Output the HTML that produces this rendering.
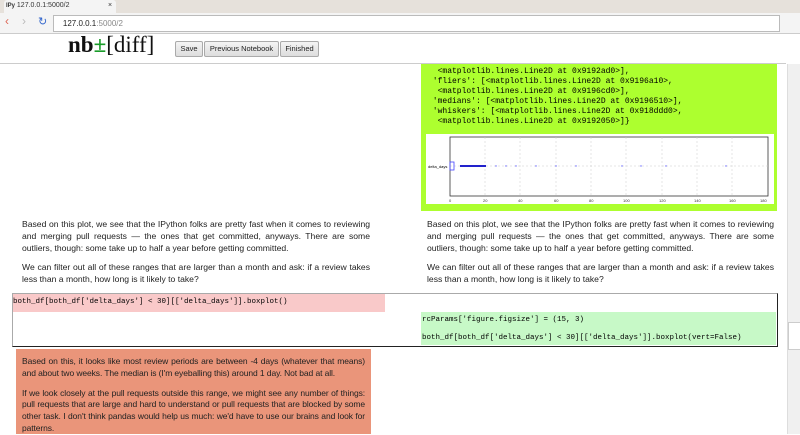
<!DOCTYPE html><html><head><style>
body{margin:0;width:800px;height:434px;overflow:hidden;background:#fff;font-family:"Liberation Sans",sans-serif;position:relative}
.a{position:absolute}
.p{font-size:8.5px;line-height:11.8px;color:#222;text-align:justify;margin:0;letter-spacing:-0.1px}
.t .p{font-size:8.6px;letter-spacing:0}
.m{font-family:"Liberation Mono",monospace;font-size:7.5px;color:#000;white-space:pre}
.btn{position:absolute;top:41px;height:14px;border:1px solid #aaa;background:linear-gradient(#f4f4f4,#ddd);font-size:7.5px;line-height:14px;text-align:center;border-radius:2px;color:#222}
</style></head><body>
<div class="a" style="left:0;top:0;width:800px;height:13px;background:#e6e1db"></div>
<div class="a" style="left:4px;top:0;width:112px;height:13px;background:#f4f4f4;border-radius:3px 3px 0 0;font-size:7px;line-height:12px;color:#333">&nbsp;<b style="font-size:6px">IPy</b> 127.0.0.1:5000/2<span style="position:absolute;left:104px">×</span></div>
<div class="a" style="left:0;top:13px;width:800px;height:20px;background:#f4f4f4;border-bottom:1px solid #ccc"></div>
<div class="a" style="left:5px;top:14px;font-size:12px;color:#d65;">‹</div>
<div class="a" style="left:22px;top:14px;font-size:12px;color:#bbb;">›</div>
<div class="a" style="left:38px;top:15px;font-size:11px;color:#36c;">↻</div>
<div class="a" style="left:53px;top:15px;width:725px;height:15px;background:#fff;border:1px solid #bbb;font-size:8px;line-height:15px;color:#222">&nbsp;&nbsp;&nbsp;&nbsp;127.0.0.1<span style="color:#888">:5000/2</span></div>
<div class="a" style="left:68px;top:32px;font-family:'Liberation Serif',serif;font-size:23px;font-weight:bold;color:#111">nb<span style="color:#1a9c2a">±</span><span style="font-weight:normal">[diff]</span></div>
<div class="btn" style="left:175px;width:26px">Save</div>
<div class="btn" style="left:204px;width:73px">Previous Notebook</div>
<div class="btn" style="left:280px;width:37px">Finished</div>
<div class="a" style="left:0;top:63px;width:786px;height:1px;background:#ccc"></div>
<div class="a" style="left:787px;top:64px;width:13px;height:370px;background:#f0f0f0;border-left:1px solid #ddd"></div>
<div class="a" style="left:788px;top:322px;width:11px;height:26px;background:#fff;border:1px solid #ccc"></div>
<div class="a" style="left:421px;top:64px;width:356px;height:147px;background:#adff2f"></div>
<div class="a m" style="left:428px;top:67px;line-height:10px;font-size:8px">  &lt;matplotlib.lines.Line2D at 0x9192ad0&gt;],
 'fliers': [&lt;matplotlib.lines.Line2D at 0x9196a10&gt;,
  &lt;matplotlib.lines.Line2D at 0x9196cd0&gt;],
 'medians': [&lt;matplotlib.lines.Line2D at 0x9196510&gt;],
 'whiskers': [&lt;matplotlib.lines.Line2D at 0x918ddd0&gt;,
  &lt;matplotlib.lines.Line2D at 0x9192050&gt;]}</div>
<svg class="a" style="left:426px;top:134px" width="348" height="70">
<rect width="348" height="70" fill="#fff"/>
<rect x="24" y="3" width="318" height="59" fill="none" stroke="#333" stroke-width=".8"/>
<g stroke="#ccc" stroke-dasharray="2,2" stroke-width=".5"><line x1="59" y1="3" x2="59" y2="62"/><line x1="94" y1="3" x2="94" y2="62"/><line x1="130" y1="3" x2="130" y2="62"/><line x1="165" y1="3" x2="165" y2="62"/><line x1="200" y1="3" x2="200" y2="62"/><line x1="236" y1="3" x2="236" y2="62"/><line x1="271" y1="3" x2="271" y2="62"/><line x1="306" y1="3" x2="306" y2="62"/><line x1="24" y1="32" x2="342" y2="32"/></g>
<rect x="24" y="28" width="4" height="8" fill="none" stroke="#44f" stroke-width=".8"/>
<line x1="34" y1="32" x2="60" y2="32" stroke="#22c" stroke-width="2"/>
<g fill="#66f"><circle cx="70" cy="32" r=".7"/><circle cx="80" cy="32" r=".7"/><circle cx="90" cy="32" r=".7"/><circle cx="110" cy="32" r=".7"/><circle cx="130" cy="32" r=".7"/><circle cx="150" cy="32" r=".7"/><circle cx="196" cy="32" r=".7"/><circle cx="215" cy="32" r=".7"/><circle cx="240" cy="32" r=".7"/><circle cx="300" cy="32" r=".7"/></g>
<text x="2" y="34" font-size="4" font-family="Liberation Sans">delta_days</text>
<g font-size="4" font-family="Liberation Sans" fill="#333"><text x="23" y="68">0</text><text x="57" y="68">20</text><text x="92" y="68">40</text><text x="128" y="68">60</text><text x="163" y="68">80</text><text x="197" y="68">100</text><text x="233" y="68">120</text><text x="268" y="68">140</text><text x="303" y="68">160</text><text x="334" y="68">180</text></g>
</svg>
<div class="a t" style="left:22px;top:219px;width:348px"><p class="p">Based on this plot, we see that the IPython folks are pretty fast when it comes to reviewing and merging pull requests — the ones that get committed, anyways. There are some outliers, though: some take up to half a year before getting committed.</p><p class="p" style="margin-top:8px">We can filter out all of these ranges that are larger than a month and ask: if a review takes less than a month, how long is it likely to take?</p></div>
<div class="a t" style="left:427px;top:219px;width:347px"><p class="p">Based on this plot, we see that the IPython folks are pretty fast when it comes to reviewing and merging pull requests — the ones that get committed, anyways. There are some outliers, though: some take up to half a year before getting committed.</p><p class="p" style="margin-top:8px">We can filter out all of these ranges that are larger than a month and ask: if a review takes less than a month, how long is it likely to take?</p></div>
<div class="a" style="left:12px;top:293px;width:764px;height:52px;border:1px solid #222;border-top-color:#aaa;border-left-color:#aaa"></div>
<div class="a" style="left:13px;top:294px;width:372px;height:18px;background:#f9c9c9"></div>
<div class="a m" style="left:13px;top:296px;line-height:12px">both_df[both_df['delta_days'] &lt; 30][['delta_days']].boxplot()</div>
<div class="a" style="left:421px;top:312px;width:355px;height:33px;background:#c7f9c7"></div>
<div class="a m" style="left:422px;top:312px;line-height:17.5px">rcParams['figure.figsize'] = (15, 3)
both_df[both_df['delta_days'] &lt; 30][['delta_days']].boxplot(vert=False)</div>
<div class="a" style="left:16px;top:349px;width:355px;height:85px;background:#ea957a"></div>
<div class="a" style="left:22px;top:356px;width:343px"><p class="p">Based on this, it looks like most review periods are between -4 days (whatever that means) and about two weeks. The median is (I'm eyeballing this) around 1 day. Not bad at all.</p><p class="p" style="margin-top:8px">If we look closely at the pull requests outside this range, we might see any number of things: pull requests that are large and hard to understand or pull requests that are blocked by some other task. I don't think pandas would help us much: we'd have to use our brains and look for patterns.</p></div>
</body></html>
